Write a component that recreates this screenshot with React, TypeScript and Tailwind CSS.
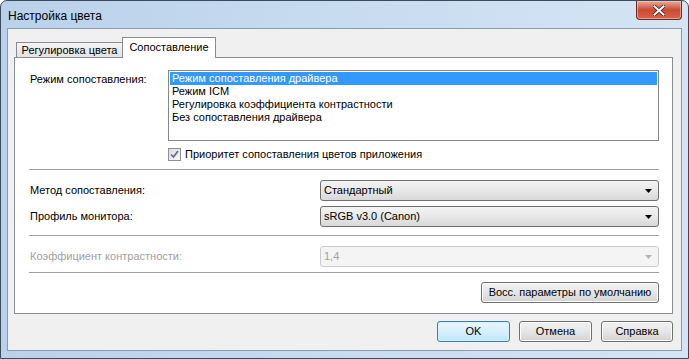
import React from "react";

const F = { fontFamily: '"Liberation Sans", Arial, sans-serif' };

function Arrow({ disabled }: { disabled?: boolean }) {
  return (
    <svg width="7" height="4" viewBox="0 0 7 4" className="shrink-0">
      <path d="M0 0 H7 L3.5 4 Z" fill={disabled ? "#b4b4b4" : "#000"} />
    </svg>
  );
}

function Combo({ text, disabled }: { text: string; disabled?: boolean }) {
  return (
    <div
      className={
        "w-[339px] h-[21px] rounded-[3px] border flex items-center justify-between pl-[3px] pr-[6px] " +
        (disabled
          ? "border-[#c9cdd2] bg-[#f4f4f4] text-[#a0a0a0]"
          : "border-[#707070] bg-gradient-to-b from-[#f4f4f4] via-[#e8e8e8] to-[#d8d8d8] text-black")
      }
    >
      <span>{text}</span>
      <Arrow disabled={disabled} />
    </div>
  );
}

function Btn({ children, def, w }: { children: React.ReactNode; def?: boolean; w: string }) {
  return (
    <div
      className={
        w +
        " h-[21px] rounded-[3px] border flex items-center justify-center " +
        (def
          ? "border-[#3c7fb1] bg-gradient-to-b from-[#eaf6fd] via-[#d9f0fc] to-[#bee6fd] shadow-[inset_0_0_0_1px_#d4eefc]"
          : "border-[#707070] bg-gradient-to-b from-[#f2f2f2] via-[#e6e6e6] to-[#d3d3d3] shadow-[inset_0_0_0_1px_#fcfcfc]")
      }
    >
      {children}
    </div>
  );
}

export default function App() {
  return (
    <div style={F} className="w-[689px] h-[359px] text-[11px] text-black overflow-hidden">
      <div className="w-full h-full rounded-t-[7px] border border-[#3b4b5e] bg-gradient-to-r from-[#b9d1ea] via-[#c8dcf0] to-[#d4e4f4] flex flex-col">
        {/* title bar */}
        <div className="h-[27px] flex items-start justify-between shrink-0">
          <div className="pl-[7px] pt-[6px] text-[12px] text-black">Настройка цвета</div>
          <div className="mr-[6px] w-[46px] h-[19px] rounded-b-[4px] border border-t-0 border-[#6b2a22] bg-gradient-to-b from-[#e9a99a] via-[#c94a31] to-[#d9634a] flex items-center justify-center shadow-[inset_0_0_0_1px_rgba(255,220,210,0.5)]">
            <svg width="12" height="11" viewBox="0 0 12 11">
              <path
                d="M1.5 1.5 L10.5 9.5 M10.5 1.5 L1.5 9.5"
                stroke="#3b2020"
                strokeWidth="3.6"
                strokeLinecap="square"
              />
              <path
                d="M1.5 1.5 L10.5 9.5 M10.5 1.5 L1.5 9.5"
                stroke="#ffffff"
                strokeWidth="2"
                strokeLinecap="square"
              />
            </svg>
          </div>
        </div>

        {/* client area */}
        <div className="mx-[6px] mb-[7px] flex-1 border border-[#8a9bb0] bg-[#f0f0f0] flex flex-col pt-[8px] pl-[6px]">
          {/* tabs */}
          <div className="h-[20px] flex items-end pl-[2px]">
            <div className="w-[107px] h-[15px] border border-b-0 border-[#898c95] bg-gradient-to-b from-[#f4f4f4] to-[#e2e2e2] flex items-center justify-center">
              Регулировка цвета
            </div>
            <div className="relative z-10 -mb-px w-[94px] h-[21px] border border-b-0 border-[#898c95] bg-white flex items-center justify-center pb-[1px] -ml-px">
              Сопоставление
            </div>
          </div>

          {/* panel */}
          <div className="w-[659px] h-[257px] border border-[#898c95] bg-white flex flex-col">
            <div className="mt-[12px] flex">
              <div className="w-[153px] pl-[15px] pt-[1px]">Режим сопоставления:</div>
              <div className="w-[491px] h-[71px] border border-[#828790] p-[1px] flex flex-col">
                <div className="h-[13px] bg-[#3399ff] text-white pl-[2px] leading-[13px]">
                  Режим сопоставления драйвера
                </div>
                <div className="h-[13px] pl-[2px] leading-[13px]">Режим ICM</div>
                <div className="h-[13px] pl-[2px] leading-[13px]">
                  Регулировка коэффициента контрастности
                </div>
                <div className="h-[13px] pl-[2px] leading-[13px]">Без сопоставления драйвера</div>
              </div>
            </div>

            <div className="mt-[7px] ml-[153px] flex items-center gap-[4px] h-[13px]">
              <div className="w-[13px] h-[13px] border border-[#8e8f8f] bg-gradient-to-br from-[#dcdcdc] to-[#fafafa] flex items-center justify-center">
                <svg width="9" height="9" viewBox="0 0 9 9">
                  <path d="M1 4.5 L3.5 7 L8 1" stroke="#5a6d9c" strokeWidth="1.7" fill="none" />
                </svg>
              </div>
              <span>Приоритет сопоставления цветов приложения</span>
            </div>

            <div className="mt-[8px] ml-[14px] mr-[13px] h-px bg-[#a0a0a0]" />

            <div className="mt-[10px] flex items-center justify-between pl-[15px] pr-[13px]">
              <span>Метод сопоставления:</span>
              <Combo text="Стандартный" />
            </div>
            <div className="mt-[5px] flex items-center justify-between pl-[15px] pr-[13px]">
              <span>Профиль монитора:</span>
              <Combo text="sRGB v3.0 (Canon)" />
            </div>

            <div className="mt-[8px] ml-[14px] mr-[13px] h-px bg-[#a0a0a0]" />

            <div className="mt-[10px] flex items-center justify-between pl-[15px] pr-[13px] text-[#a0a0a0]">
              <span>Коэффициент контрастности:</span>
              <Combo text="1,4" disabled />
            </div>

            <div className="mt-[5px] ml-[14px] mr-[13px] h-px bg-[#a0a0a0]" />

            <div className="mt-[9px] flex justify-end pr-[13px]">
              <Btn w="w-[178px]">Восс. параметры по умолчанию</Btn>
            </div>
          </div>

          {/* bottom buttons */}
          <div className="mt-[7px] w-[659px] flex justify-end gap-[9px]">
            <Btn def w="w-[73px]">OK</Btn>
            <Btn w="w-[73px]">Отмена</Btn>
            <Btn w="w-[72px]">Справка</Btn>
          </div>
        </div>
      </div>
    </div>
  );
}
